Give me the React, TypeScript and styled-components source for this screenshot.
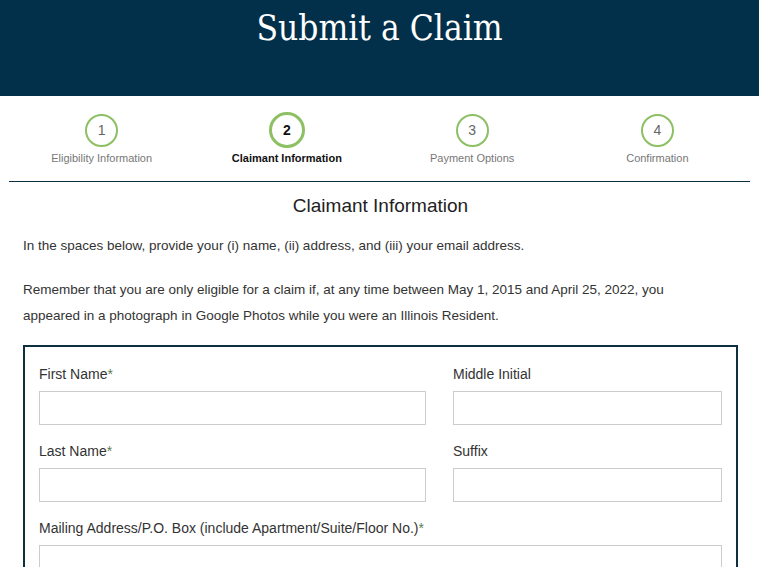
import styled, { createGlobalStyle } from 'styled-components';

const GlobalStyle = createGlobalStyle`
  body {
    margin: 0;
    background: #fff;
    font-family: "Liberation Sans", Arial, sans-serif;
    color: #333;
  }
`;

const Header = styled.header`
  height: 96px;
  background: #02304a;
  display: flex;
  justify-content: center;
`;

const Title = styled.h1`
  margin: 0;
  padding-top: 6px;
  font-family: "DejaVu Serif Condensed", "DejaVu Serif", serif;
  font-weight: 400;
  font-size: 35px;
  line-height: 44px;
  color: #fff;
`;

const Page = styled.main`
  margin: 0 9px;
`;

const Steps = styled.ol`
  list-style: none;
  margin: 0;
  padding: 16px 0 16px;
  display: grid;
  grid-template-columns: repeat(4, 1fr);
  border-bottom: 1px solid #0d2f3f;
`;

const Step = styled.li`
  display: flex;
  flex-direction: column;
  align-items: center;
`;

const CircleSlot = styled.div`
  height: 36px;
  display: flex;
  align-items: center;
`;

const Circle = styled.span<{ $active?: boolean }>`
  box-sizing: border-box;
  width: ${(p) => (p.$active ? 36 : 33)}px;
  height: ${(p) => (p.$active ? 36 : 33)}px;
  border-radius: 50%;
  border: ${(p) => (p.$active ? 3 : 2.5)}px solid #8cc063;
  display: flex;
  align-items: center;
  justify-content: center;
  font-size: 14px;
  font-weight: ${(p) => (p.$active ? 700 : 400)};
  color: ${(p) => (p.$active ? '#111' : '#666')};
`;

const StepLabel = styled.span<{ $active?: boolean }>`
  margin-top: 3px;
  font-size: 11px;
  line-height: 14px;
  font-weight: ${(p) => (p.$active ? 700 : 400)};
  color: ${(p) => (p.$active ? '#111' : '#777')};
`;

const Content = styled.section`
  padding: 11px 12px 0 14px;
`;

const Heading = styled.h2`
  margin: 0 0 14px;
  text-align: center;
  font-size: 19px;
  line-height: 26px;
  font-weight: 400;
  color: #222;
`;

const Para = styled.p`
  margin: 0 0 18px;
  max-width: 660px;
  font-size: 13.5px;
  line-height: 26px;
  color: #333;

  &:last-of-type {
    margin-bottom: 16px;
  }
`;

const FormBox = styled.form`
  margin: 0;
  border: 2px solid #0d2f3f;
  padding: 17px 14px 15px;
  display: grid;
  grid-template-columns: 387fr 269fr;
  column-gap: 27px;
  row-gap: 16px;
`;

const Field = styled.div<{ $wide?: boolean }>`
  display: flex;
  flex-direction: column;
  gap: 7px;
  grid-column: ${(p) => (p.$wide ? '1 / -1' : 'auto')};
`;

const Label = styled.label`
  font-size: 14px;
  line-height: 20px;
  color: #333;
`;

const Req = styled.span`
  color: #5d7d52;
`;

const Input = styled.input`
  box-sizing: border-box;
  height: 34px;
  border: 1px solid #ccc;
  padding: 0 8px;
  font: inherit;
`;

const steps = ['Eligibility Information', 'Claimant Information', 'Payment Options', 'Confirmation'];

export default function App() {
  return (
    <>
      <GlobalStyle />
      <Header>
        <Title>Submit a Claim</Title>
      </Header>
      <Page>
        <Steps>
          {steps.map((s, i) => (
            <Step key={s}>
              <CircleSlot>
                <Circle $active={i === 1}>{i + 1}</Circle>
              </CircleSlot>
              <StepLabel $active={i === 1}>{s}</StepLabel>
            </Step>
          ))}
        </Steps>
        <Content>
          <Heading>Claimant Information</Heading>
          <Para>In the spaces below, provide your (i) name, (ii) address, and (iii) your email address.</Para>
          <Para>
            Remember that you are only eligible for a claim if, at any time between May 1, 2015 and April 25, 2022, you
            appeared in a photograph in Google Photos while you were an Illinois Resident.
          </Para>
          <FormBox>
            <Field>
              <Label>First Name<Req>*</Req></Label>
              <Input />
            </Field>
            <Field>
              <Label>Middle Initial</Label>
              <Input />
            </Field>
            <Field>
              <Label>Last Name<Req>*</Req></Label>
              <Input />
            </Field>
            <Field>
              <Label>Suffix</Label>
              <Input />
            </Field>
            <Field $wide>
              <Label>Mailing Address/P.O. Box (include Apartment/Suite/Floor No.)<Req>*</Req></Label>
              <Input />
            </Field>
          </FormBox>
        </Content>
      </Page>
    </>
  );
}
